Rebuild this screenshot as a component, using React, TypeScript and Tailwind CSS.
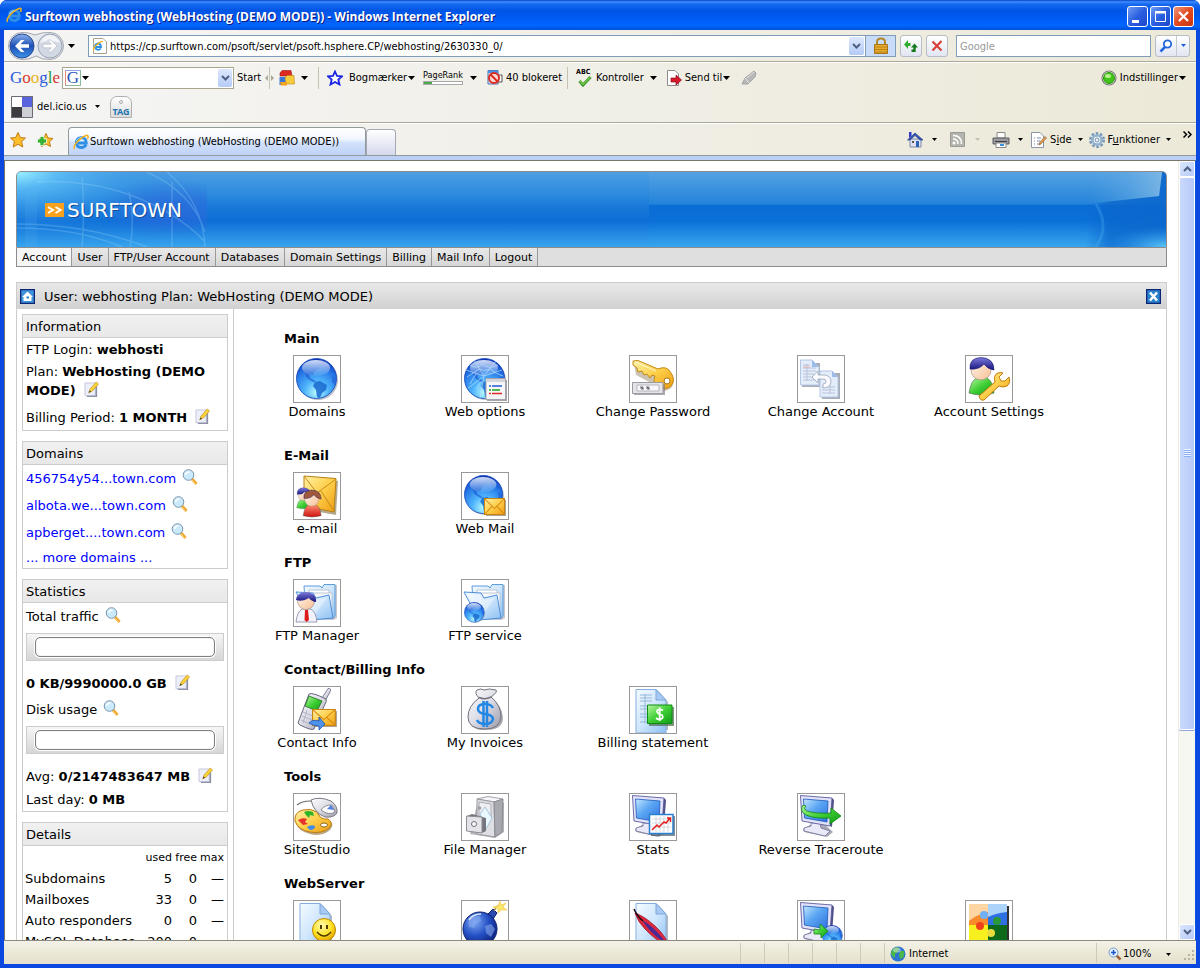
import type { ReactNode } from "react";

type Service = { name: string; icon: ReactNode };
type Section = { title: string; services: Service[] };

/* ---------- shared gradients ---------- */

function Gradients() {
  return (
    <svg width="0" height="0" className="absolute" aria-hidden="true">
      <defs>
        <radialGradient id="globe" cx="0.5" cy="0.85" r="0.85">
          <stop offset="0" stopColor="#b8fbff" />
          <stop offset="0.35" stopColor="#4fb4fb" />
          <stop offset="0.75" stopColor="#2171e4" />
          <stop offset="1" stopColor="#0c2fb4" />
        </radialGradient>
        <linearGradient id="shine" x1="0" y1="0" x2="0" y2="1">
          <stop offset="0" stopColor="#ffffff" stopOpacity="0.8" />
          <stop offset="1" stopColor="#ffffff" stopOpacity="0.05" />
        </linearGradient>
        <linearGradient id="gold" x1="0" y1="0" x2="1" y2="1">
          <stop offset="0" stopColor="#fff1a8" />
          <stop offset="0.5" stopColor="#fdcf4a" />
          <stop offset="1" stopColor="#ee9c12" />
        </linearGradient>
        <linearGradient id="folder" x1="0" y1="0" x2="1" y2="1">
          <stop offset="0" stopColor="#f4fbff" />
          <stop offset="0.5" stopColor="#cfe6fc" />
          <stop offset="1" stopColor="#8dc0f4" />
        </linearGradient>
        <linearGradient id="screen" x1="0" y1="0" x2="1" y2="1">
          <stop offset="0" stopColor="#c4e6ff" />
          <stop offset="0.45" stopColor="#5aa5f2" />
          <stop offset="1" stopColor="#2f6fe0" />
        </linearGradient>
        <linearGradient id="silver" x1="0" y1="0" x2="1" y2="1">
          <stop offset="0" stopColor="#ffffff" />
          <stop offset="0.5" stopColor="#dcdce6" />
          <stop offset="1" stopColor="#9a9aa8" />
        </linearGradient>
        <linearGradient id="green" x1="0" y1="0" x2="1" y2="1">
          <stop offset="0" stopColor="#b6f7a0" />
          <stop offset="0.5" stopColor="#3fcf35" />
          <stop offset="1" stopColor="#0f9a17" />
        </linearGradient>
        <linearGradient id="red" x1="0" y1="0" x2="0" y2="1">
          <stop offset="0" stopColor="#ff8d70" />
          <stop offset="1" stopColor="#cf1010" />
        </linearGradient>
        <linearGradient id="skin" x1="0" y1="0" x2="1" y2="1">
          <stop offset="0" stopColor="#fff6ec" />
          <stop offset="1" stopColor="#f7bf95" />
        </linearGradient>
        <linearGradient id="navy" x1="0" y1="0" x2="0" y2="1">
          <stop offset="0" stopColor="#7d7bdc" />
          <stop offset="1" stopColor="#15127c" />
        </linearGradient>
        <radialGradient id="bomb" cx="0.35" cy="0.3" r="0.8">
          <stop offset="0" stopColor="#7ea9f6" />
          <stop offset="0.5" stopColor="#2450c4" />
          <stop offset="1" stopColor="#0a1a70" />
        </radialGradient>
        <linearGradient id="back" x1="0" y1="0" x2="0" y2="1">
          <stop offset="0" stopColor="#8fb2ee" />
          <stop offset="0.5" stopColor="#1c4fb4" />
          <stop offset="1" stopColor="#3f93e8" />
        </linearGradient>
        <radialGradient id="smile" cx="0.4" cy="0.3" r="0.75">
          <stop offset="0" stopColor="#fffbb0" />
          <stop offset="0.6" stopColor="#ffdf1e" />
          <stop offset="1" stopColor="#e09a00" />
        </radialGradient>
        <radialGradient id="bannerGlow" cx="0" cy="0" r="0.9">
          <stop offset="0" stopColor="#9cf0ff" />
          <stop offset="0.25" stopColor="#5cc0f8" stopOpacity="0.8" />
          <stop offset="1" stopColor="#1e7fe0" stopOpacity="0" />
        </radialGradient>
        <radialGradient id="bannerDeep" cx="0.82" cy="0.5" r="0.4">
          <stop offset="0" stopColor="#2f68dc" stopOpacity="0.7" />
          <stop offset="0.5" stopColor="#2f68dc" stopOpacity="0.45" />
          <stop offset="1" stopColor="#2a70dc" stopOpacity="0" />
        </radialGradient>
        <linearGradient id="bannerSheen" x1="0" y1="0" x2="1" y2="0">
          <stop offset="0" stopColor="#4f9fe0" stopOpacity="0" />
          <stop offset="1" stopColor="#86bce6" stopOpacity="0.8" />
        </linearGradient>
        <linearGradient id="bannerDark" x1="0" y1="0" x2="1" y2="0">
          <stop offset="0" stopColor="#0a66cc" stopOpacity="0" />
          <stop offset="0.3" stopColor="#0a66cc" stopOpacity="0.7" />
          <stop offset="1" stopColor="#0a66cc" stopOpacity="0.9" />
        </linearGradient>
        <radialGradient id="bannerCorner" cx="1" cy="1" r="0.9">
          <stop offset="0" stopColor="#5cc8f8" />
          <stop offset="1" stopColor="#2a90e8" stopOpacity="0" />
        </radialGradient>
      </defs>
    </svg>
  );
}

/* ---------- 46px picture parts ---------- */

function Pic({ children }: { children: ReactNode }) {
  return (
    <svg viewBox="0 0 46 46" className="block h-full w-full" aria-hidden="true">
      {children}
    </svg>
  );
}

function Globe({ x = 2, y = 2, size = 42 }: { x?: number; y?: number; size?: number }) {
  return (
    <svg x={x} y={y} width={size} height={size} viewBox="0 0 42 42">
      <ellipse cx="22" cy="22" rx="20" ry="20" fill="#7b8494" opacity="0.5" />
      <circle cx="20.5" cy="20.5" r="20" fill="url(#globe)" stroke="#1243b8" strokeWidth="0.8" />
      <path
        d="M5 9 Q10 3 18 2 L24 4 L21 8 L24 10 L19 13 L17 17 L13 16 L14 20 L18 22 L20 24 L17 24 L11 20 L8 14 L4 13 Z"
        fill="#1f62d8"
        opacity="0.75"
      />
      <path d="M19 24 L24 23 L31 27 L30 32 L26 35 L24 40 L21 39 L20 32 L17 28 Z" fill="#1868cf" opacity="0.85" />
      <path d="M29 4 Q36 8 39 15 L35 14 L32 10 Z M36 18 L40 20 L39 27 L36 24 Z" fill="#1f62d8" opacity="0.7" />
      <ellipse cx="20" cy="10" rx="14" ry="8" fill="url(#shine)" />
    </svg>
  );
}

function Person({ hair, body }: { hair: string; body: string }) {
  return (
    <>
      <path d="M3 37 Q5 24 11 22 H21 Q27 25 28 37 Q15 41 3 37Z" fill={body} stroke="#49604a" strokeWidth="0.6" />
      <circle cx="15" cy="14" r="10" fill="url(#skin)" stroke="#9a8578" strokeWidth="0.6" />
      <path d="M4 13 Q3 2 15 1.500 Q28 2 28 14 Q21 13 18 8 Q13 14 4 13Z" fill={hair} stroke="#1a1470" strokeWidth="0.6" />
    </>
  );
}

function Folder() {
  return (
    <>
      <path d="M11 6 H27 L30 9 L31 5 H43 V38 L40 40 H14Z" fill="#7c8494" opacity="0.45" />
      <path d="M10 6 H26 L28 8 L30 4.500 H41 V36 L39 38 H12Z" fill="url(#folder)" stroke="#5d9be0" />
      <path d="M15 10 H35 V30 H15Z" fill="#ffffff" stroke="#b9c6d4" />
      <path d="M18 13 H38 V34 H18Z" fill="#f6f8fa" stroke="#b9c6d4" />
      <path d="M2 12 L19 13 L22 18 L35 15 L39 38 L17 40 Z" fill="url(#folder)" stroke="#4d8edb" />
      <path d="M5 14 L18 15 L21 20 L33 18 L20 36Z" fill="#ffffff" opacity="0.35" />
    </>
  );
}

function Mail({ x, y, w, h }: { x: number; y: number; w: number; h: number }) {
  return (
    <svg x={x} y={y} width={w} height={h} viewBox="0 0 22 17" preserveAspectRatio="none">
      <path d="M2 2 H22 V17 H2Z" fill="#8c8068" opacity="0.7" />
      <path d="M0.500 0.500 H20.500 V15.500 H0.500Z" fill="url(#gold)" stroke="#c98310" />
      <path d="M1 1 L10.500 10 L20 1 M1 15 L8 8 M20 15 L13 8" fill="none" stroke="#d88a10" />
    </svg>
  );
}

function Monitor() {
  return (
    <>
      <path d="M12 31 L24 28 L35 38 L29 43 L6 38 L5 35Z" fill="#55556a" opacity="0.5" />
      <path d="M13 29 L22 29 L23 34 L32 37 L27 42 L6 37 L6 34 L13 32Z" fill="#e9e9f8" stroke="#70709c" strokeWidth="0.8" />
      <path d="M2.500 1.500 L34 4 L32 32 L4 27Z" fill="#e2e2fb" stroke="#6c6ca6" />
      <path d="M34 4 L36 6 L34 33 L32 32Z" fill="#51518c" />
      <path d="M5.500 5 L30 7 L29 28 L6.500 24Z" fill="url(#screen)" stroke="#1c55b8" strokeWidth="0.8" />
    </>
  );
}

function Sheet({ lines = false }: { lines?: boolean }) {
  return (
    <>
      <path d="M8 4 H28 L38 15 V43 H8Z" fill="#6c7686" opacity="0.5" />
      <path d="M6 2.500 H26 L36 13 V46 H6Z" fill="url(#folder)" stroke="#86aede" />
      <path d="M26 2.500 V13 H36Z" fill="#a8c9f2" stroke="#7ba6dc" />
      {lines && (
        <path
          d="M10 8 H22 M10 11 H22 M10 14 H22 M10 19 H32 M10 22 H32 M10 27 H32 M10 30 H32 M10 35 H32 M15 7 V36 M21 18 V36"
          stroke="#93b7d8"
          fill="none"
        />
      )}
    </>
  );
}

/* ---------- service pictures ---------- */

const domainsPic = <Pic><Globe /></Pic>;

const webOptionsPic = (
  <Pic>
    <Globe />
    <path
      d="M4 14 L22 20 L40 14 M22 20 L12 4 M22 20 L34 5 M22 20 L6 32 M22 20 L18 42 M8 9 Q16 14 20 8 Q26 14 36 9 M5 21 Q13 16 17 13 Q23 16 28 13 Q32 17 41 20 M8 28 Q12 21 14 18 M15 33 Q17 27 20 25"
      fill="none"
      stroke="#b8dcfc"
      strokeWidth="0.7"
    />
    <path d="M25 24 H45 V45 H25Z" fill="#6b6b72" opacity="0.6" />
    <path d="M24 22.500 H43.500 V43.500 H24Z" fill="#f6f6f8" stroke="#a2a2ac" />
    <path d="M24 23 H43 V26 H24Z" fill="#d5d5de" />
    <path d="M27 30 H29 M30 30 H40" stroke="#2458d0" strokeWidth="1.500" />
    <path d="M27 34 H29 M30 34 H38" stroke="#1ea31e" strokeWidth="1.500" />
    <path d="M27 37.500 H29 M30 37.500 H40" stroke="#e02828" strokeWidth="1.500" />
  </Pic>
);

const passwordPic = (
  <Pic>
    <path d="M4 8 L25 18 Q33 10 40 16 Q46 22 42 31 Q36 37 28 34 L23 28 L6 19Z" fill="#7d6a40" opacity="0.4" />
    <path
      d="M3 5 L8 4.500 L28 13 Q37 9 41 17 Q46 24 41 30 Q35 35 28 31 Q22 27 25 20 L22 19 L20 22 L17 18 L14 19 L12 15 L8 16 L7 12 L3 9Z"
      fill="url(#gold)"
      stroke="#c28a10"
    />
    <path d="M5 6 L26 15" stroke="#fff7c8" fill="none" />
    <circle cx="37" cy="25" r="3" fill="#ffffff" stroke="#a87410" />
    <path d="M4 28 H35 V39 H4Z" fill="#75757c" opacity="0.6" />
    <path d="M2.500 26.500 H33 V37.500 H2.500Z" fill="#e5e5e9" stroke="#9a9aa2" />
    <path d="M7 29 H29 V35 H7Z" fill="#f8f8fa" stroke="#a8a8b0" strokeWidth="0.8" />
    <path d="M10 32 H14 M12 30 V34 M10.500 30.500 L13.500 33.500 M16 32 H20 M18 30 V34 M16.500 30.500 L19.500 33.500" stroke="#4c4c54" strokeWidth="0.8" />
  </Pic>
);

const changeAccountPic = (
  <Pic>
    <path d="M4 7 H22 V31 H4Z" fill="#6f7684" opacity="0.6" />
    <path d="M2.500 4 H14 L21 11 V29 H2.500Z" fill="#e4edfa" stroke="#b3c6e4" />
    <path d="M14 4 V11 H21Z" fill="#9dbbe8" />
    <path d="M5 9 H12 M5 12 H18 M5 15 H18 M5 18 H16 M5 21 H18 M5 24 H18 M9 8 V25" stroke="#b7c4da" fill="none" />
    <path d="M5 11 H12" stroke="#e8b2b2" />
    <path d="M24 17 H42 V43 H24Z" fill="#6f7684" opacity="0.6" />
    <path d="M22 15 H34 L40 21 V41 H22Z" fill="#e4edfa" stroke="#b3c6e4" />
    <path d="M34 15 V21 H40Z" fill="#9dbbe8" />
    <path d="M24 31 H37 M24 34 H37 M24 37 H37 M32 24 V38" stroke="#b7c4da" fill="none" />
    <path d="M14 21 L20 15 V19 H27 Q33 20 33 26 Q32 32 25 32 V28 Q28 28 28 25.500 Q28 23 25 23 H20 V27Z" fill="#fbfbff" stroke="#9ba5b8" strokeWidth="0.8" />
  </Pic>
);

const accountSettingsPic = (
  <Pic>
    <Person hair="url(#navy)" body="url(#green)" />
    <path
      d="M13 40 L29 26 Q27 19 32 17 Q35 16 37 17 L33 21 L35 25 L39 25 L43 21 Q45 27 41 30 Q37 32 33 30 L18 44 Q14 45 13 40Z"
      fill="url(#gold)"
      stroke="#c27c0c"
    />
  </Pic>
);

const emailPic = (
  <Pic>
    <path d="M11 5 L44 8 L42 42 L14 37Z" fill="#80704a" opacity="0.6" />
    <path d="M10 3 L42 5.500 L40 39 L10 33Z" fill="url(#gold)" stroke="#b98212" />
    <path d="M10 3 L23 20 L42 6 M10 33 L22 19 M40 38 L27 18" fill="none" stroke="#c88a18" />
    <g transform="translate(1 14) scale(0.560)">
      <Person hair="url(#navy)" body="url(#green)" />
    </g>
    <g transform="translate(7 16) scale(0.720)">
      <Person hair="#a0583c" body="url(#red)" />
    </g>
  </Pic>
);

const webMailPic = (
  <Pic>
    <Globe size={40} />
    <Mail x={22} y={25} w={22} h={18} />
  </Pic>
);

const ftpManagerPic = (
  <Pic>
    <Folder />
    <path d="M2 42 Q3 32 8 29 H17 Q22 32 23 42Z" fill="#f2f2fa" stroke="#8585a2" strokeWidth="0.8" />
    <path d="M11 30 H14 L15 40 L12.500 42 L10.500 40Z" fill="#dd1a1a" />
    <circle cx="12" cy="21" r="8.500" fill="url(#skin)" stroke="#9a8578" strokeWidth="0.6" />
    <path d="M2 20 Q3 12 12 12 Q23 13 22 22 Q17 21 15 18 Q9 22 2 20Z" fill="url(#navy)" />
  </Pic>
);

const ftpServicePic = (
  <Pic>
    <Folder />
    <Globe x={2} y={22} size={21} />
  </Pic>
);

const contactPic = (
  <Pic>
    <path d="M28 11 L34 1.500 Q38 1 36 5 L31 14Z" fill="url(#silver)" stroke="#666680" strokeWidth="0.8" />
    <path d="M4 36 L15 7 Q18 5 32 12 Q33 14 31 17 L20 42 Q18 44 6 38Z" fill="url(#silver)" stroke="#666680" />
    <path d="M15 9 L28 14 L23 24 L11 19Z" fill="url(#green)" stroke="#206c20" strokeWidth="0.8" />
    <path d="M9 25 L19 29 M8 29 L18 33 M7 33 L16 37 M13 23 L9 36" stroke="#b4b4c4" fill="none" />
    <Mail x={18} y={22} w={25} h={18} />
    <path d="M15 36 Q18 32 25 34 V30 L31 37 L25 43 V39 Q19 39 15 36Z" fill="#4f92ea" stroke="#1c56b8" strokeWidth="0.8" />
  </Pic>
);

const invoicesPic = (
  <Pic>
    <path d="M17 11 Q5 20 6 32 Q9 44 24 43 Q41 43 41 31 Q40 18 29 11Z" fill="#55555e" opacity="0.5" />
    <path d="M15 3 Q19 1 22 3 Q27 1 34 3 Q36 5 29 10 Q39 18 39 30 Q38 42 23 42 Q6 42 6 30 Q6 19 17 11 Q12 6 15 3Z" fill="url(#silver)" stroke="#73737e" />
    <path d="M17 10.500 Q23 13 29 10" fill="none" stroke="#73737e" strokeWidth="1.500" />
    <path
      d="M31 21 Q29 17 23 17 Q16 17 16 22 Q16 26 23 27 Q31 28 31 32 Q30 37 23 37 Q17 37 15 33 M21.500 14 V40 M25 14 V40"
      fill="none"
      stroke="#2287e4"
      strokeWidth="2.500"
    />
  </Pic>
);

const billingPic = (
  <Pic>
    <Sheet lines />
    <path d="M19 20 H44 V39 H19Z" fill="#4c6a4c" opacity="0.7" />
    <path d="M17.500 18 H42 V36.500 H17.500Z" fill="url(#green)" stroke="#0f8a15" />
    <path d="M33 23.500 Q30 21.500 27.500 23 Q26 25 29 27 L32 28 Q34 31 31 32 Q28 33 26 31 M29.700 20.500 V34" fill="none" stroke="#ffffff" strokeWidth="1.800" />
  </Pic>
);

const studioPic = (
  <Pic>
    <path d="M3 11 Q8 7 16 7 Q20 7 22 9" fill="none" stroke="#6c6c70" strokeWidth="1.200" />
    <path d="M2 29 Q0 20 9 17 Q17 14 25 20 Q27 27 35 26 Q41 30 36 36 Q28 43 16 40 Q4 37 2 29Z" fill="#8a6a34" opacity="0.6" />
    <path d="M1 27 Q0 18 9 16 Q17 14 23 18 Q26 26 34 25 Q40 29 35 34 Q28 40 16 38 Q4 36 1 27Z" fill="url(#gold)" stroke="#bd7a0e" />
    <path d="M10 18 Q14 16 19 18 L20 22 L16 21 L15 24 L12 21Z" fill="#2db52a" />
    <path d="M4 26 Q9 23 13 25 L11 28 L14 30 L9 31 L7 29Z" fill="#e4342c" />
    <path d="M13 33 Q17 30 21 32 Q21 36 16 36Z" fill="#3f8be6" />
    <ellipse cx="30" cy="31" rx="3.500" ry="2" fill="#ffffff" stroke="#8e6414" />
    <path d="M17 6 Q25 2 37 7 Q44 12 43 19 Q40 24 31 23 Q20 19 17 6Z" fill="url(#silver)" stroke="#7b7b84" />
    <path d="M27 16 Q30 11 38 11 L41 18 Q35 22 27 16Z" fill="#ffffff" stroke="#8c8c98" />
    <path d="M33 15 L37 11 L40 16Z" fill="#4f7fe0" />
  </Pic>
);

const filePic = (
  <Pic>
    <path d="M16 6 L33 4 L42 9 V38 L33 44 L8 40Z" fill="#44444c" opacity="0.4" />
    <path d="M15 5 L26 2.500 L41 5 L32 8Z" fill="#f6f6f8" stroke="#a4a4ac" />
    <path d="M15 5 L32 8 L33 43 L15 40Z" fill="#dedee4" stroke="#9a9aa2" />
    <path d="M32 8 L41 5 L40 38 L33 43Z" fill="#a8a8b0" stroke="#8c8c94" />
    <path d="M17 8 L29 10 V24 L17 22Z" fill="#eeeef2" stroke="#aaaab2" />
    <circle cx="17.500" cy="14" r="1.800" fill="#a0a0a8" />
    <path d="M18 20 L23 13 L30 24 L24 35Z" fill="#eaf8ff" stroke="#a5c5da" />
    <path d="M5 22 L10 20 L24 24 L24 37 L20 39Z" fill="#74747c" />
    <path d="M4.500 22 L20 23 V39 L4.500 37Z" fill="#e4e4e8" stroke="#8c8c94" />
    <circle cx="12" cy="30" r="2.500" fill="#ffffff" stroke="#707078" />
  </Pic>
);

const statsPic = (
  <Pic>
    <Monitor />
    <path d="M21 22 H45 V42 H21Z" fill="#4c5c6c" opacity="0.7" />
    <path d="M19.500 20.500 H43 V39.500 H19.500Z" fill="#ffffff" stroke="#2a80cc" strokeWidth="1.500" />
    <path d="M22 25 H41 M22 29 H41 M22 33 H41 M26 22 V38 M30 22 V38 M34 22 V38 M38 22 V38" stroke="#c4ccd4" strokeWidth="0.700" />
    <path d="M22 36 L27 31 L29 33 L34 28 L36 29 L40 24 M37 24 H40.500 V28" fill="none" stroke="#e42020" strokeWidth="1.500" />
  </Pic>
);

const traceroutePic = (
  <Pic>
    <Monitor />
    <path
      d="M5 11 Q1 17 8 21 Q17 25 32 24 V30 L43 22 L33 14 V19 Q18 20 9 17 Q5 15 8 12Z"
      fill="url(#green)"
      stroke="#0c8412"
      strokeWidth="0.8"
    />
  </Pic>
);

const smilePic = (
  <Pic>
    <Sheet />
    <circle cx="30" cy="29" r="11.500" fill="url(#smile)" stroke="#bd8a00" />
    <path d="M27 24 V28 M33 24 V28" stroke="#4c3800" strokeWidth="2" />
    <path d="M23 31 Q30 39 37 31" fill="none" stroke="#4c3800" strokeWidth="1.500" />
  </Pic>
);

const bombPic = (
  <Pic>
    <path d="M26 13 L31 8 L35 12 L31 18Z" fill="#2b4bb0" stroke="#0c1f6c" />
    <path d="M32 10 Q35 4 38 5" stroke="#8c7a50" fill="none" strokeWidth="1.500" />
    <path d="M38 0 L39 4 L44 2 L41 6 L45 9 L39 9 L36 12 L36 8 L31 6 L36 5Z" fill="#fbe56a" stroke="#edc440" strokeWidth="0.600" />
    <circle cx="18" cy="28" r="17" fill="url(#bomb)" stroke="#0c1f6c" />
    <path d="M6 21 Q11 14 18 15 L19 20 L14 22 L12 27 L7 26Z M23 25 L29 23 L33 28 L29 36 L24 32Z" fill="#86a9ec" opacity="0.6" />
    <path d="M7 19 Q11 13 19 13" stroke="#dbe7ff" strokeWidth="1.500" fill="none" />
  </Pic>
);

const featherPic = (
  <Pic>
    <Sheet />
    <path d="M5 12 Q14 15 25 25 Q35 34 40 46 Q26 40 15 28 Q8 21 5 12Z" fill="#e0283c" stroke="#a01828" strokeWidth="0.8" />
    <path d="M12 19 Q25 26 36 42 Q22 35 12 19Z" fill="#4b2a92" />
    <path d="M4 8 Q7 15 13 20" stroke="#1a0a10" strokeWidth="1.500" fill="none" />
  </Pic>
);

const uploadPic = (
  <Pic>
    <Monitor />
    <Globe x={24} y={24} size={21} />
    <path d="M16 28 L22 29 V23 L30 30 L23 37 V33 L16 33Z" fill="url(#green)" stroke="#0f8a15" strokeWidth="0.8" />
  </Pic>
);

const puzzlePic = (
  <Pic>
    <path d="M5 5 H43 V46 H5Z" fill="#333" />
    <path d="M3 3 H22 V24 H3Z" fill="#f98a2c" />
    <path d="M3 3 H22 V11 Q10 14 3 20Z" fill="#fdd6a4" />
    <path d="M22 3 H41 V24 H22Z" fill="#2f6fe4" />
    <path d="M22 3 H41 V11 Q30 12 22 16Z" fill="#acd4fb" />
    <path d="M3 24 H22 V46 H3Z" fill="#f8f01e" />
    <path d="M22 24 H41 V46 H22Z" fill="#0d6a1a" />
    <circle cx="18" cy="14" r="4" fill="#6fb0f6" />
    <circle cx="14" cy="25" r="4" fill="#f0401c" />
    <circle cx="31" cy="20" r="4" fill="#2a9a38" />
    <circle cx="25" cy="32" r="4" fill="#e8dc3c" />
  </Pic>
);

const sections: Section[] = [
  {
    title: "Main",
    services: [
      { name: "Domains", icon: domainsPic },
      { name: "Web options", icon: webOptionsPic },
      { name: "Change Password", icon: passwordPic },
      { name: "Change Account", icon: changeAccountPic },
      { name: "Account Settings", icon: accountSettingsPic },
    ],
  },
  {
    title: "E-Mail",
    services: [
      { name: "e-mail", icon: emailPic },
      { name: "Web Mail", icon: webMailPic },
    ],
  },
  {
    title: "FTP",
    services: [
      { name: "FTP Manager", icon: ftpManagerPic },
      { name: "FTP service", icon: ftpServicePic },
    ],
  },
  {
    title: "Contact/Billing Info",
    services: [
      { name: "Contact Info", icon: contactPic },
      { name: "My Invoices", icon: invoicesPic },
      { name: "Billing statement", icon: billingPic },
    ],
  },
  {
    title: "Tools",
    services: [
      { name: "SiteStudio", icon: studioPic },
      { name: "File Manager", icon: filePic },
      { name: "Stats", icon: statsPic },
      { name: "Reverse Traceroute", icon: traceroutePic },
    ],
  },
  {
    title: "WebServer",
    services: [
      { name: "", icon: smilePic },
      { name: "", icon: bombPic },
      { name: "", icon: featherPic },
      { name: "", icon: uploadPic },
      { name: "", icon: puzzlePic },
    ],
  },
];

const menu = ["Account", "User", "FTP/User Account", "Databases", "Domain Settings", "Billing", "Mail Info", "Logout"];

const domains = ["456754y54...town.com", "albota.we...town.com", "apberget....town.com"];

const details = [
  { name: "Subdomains", used: 5, free: 0 },
  { name: "Mailboxes", used: 33, free: 0 },
  { name: "Auto responders", used: 0, free: 0 },
  { name: "MySQL Database", used: 200, free: 0 },
];

/* ---------- browser chrome ---------- */

function Caret({ className = "text-black" }: { className?: string }) {
  return (
    <svg viewBox="0 0 7 4" className={`h-1 w-[7px] shrink-0 ${className}`} aria-hidden="true">
      <path d="M0 0 H7 L3.500 4Z" fill="currentColor" />
    </svg>
  );
}

function SmallCaret({ className = "text-black" }: { className?: string }) {
  return (
    <svg viewBox="0 0 5 3" className={`h-[3px] w-[5px] shrink-0 ${className}`} aria-hidden="true">
      <path d="M0 0 H5 L2.500 3Z" fill="currentColor" />
    </svg>
  );
}

function Chevron({ up = false }: { up?: boolean }) {
  return (
    <svg viewBox="0 0 9 6" className="h-[6px] w-[9px]" aria-hidden="true">
      <path d={up ? "M1 5 L4.500 1.500 L8 5" : "M1 1 L4.500 4.500 L8 1"} fill="none" stroke="#4d6185" strokeWidth="2" />
    </svg>
  );
}

function IeLogo() {
  return (
    <svg viewBox="0 0 16 16" className="h-4 w-4 shrink-0" aria-hidden="true">
      <path d="M13.200 10.800 Q11.500 13.600 8.200 13.600 Q3.500 13.300 3.300 8.600 Q3.600 4 8.200 3.700 Q13.200 4 13.300 9 H5" fill="none" stroke="#2f8fe6" strokeWidth="2.800" />
      <path d="M3.200 7 Q4.500 4 8.500 3.300" fill="none" stroke="#a4d8fa" />
      <path d="M1.500 15 Q0 12 5 7 Q10 2 14 1.200 Q16 1.500 14.500 5" fill="none" stroke="#f2b21c" strokeWidth="1.500" />
    </svg>
  );
}

function TitleBar() {
  const buttonClass = "flex h-[21px] w-[21px] items-center justify-center rounded-[3px] border border-white";
  return (
    <header className="flex h-[30px] shrink-0 items-center gap-[3px] bg-[linear-gradient(180deg,#0842c4_0%,#3c8cff_6%,#1668ee_14%,#0055e5_35%,#0059f0_55%,#0066ff_85%,#0050d8_100%)] pl-[6px] pr-[6px]">
      <IeLogo />
      <h1 className="flex-1 truncate pt-1 font-['Open_Sans',sans-serif] text-[12px] font-bold leading-4 text-white [text-shadow:1px_1px_0_#0a1883]">
        Surftown webhosting (WebHosting (DEMO MODE)) - Windows Internet Explorer
      </h1>
      <div className="flex gap-[2px] pt-[3px]">
        <button aria-label="Minimize" className={`${buttonClass} bg-[linear-gradient(135deg,#6d9bf5,#2b5fe0_50%,#1c46c8)]`}>
          <svg viewBox="0 0 19 19" className="h-[19px] w-[19px]"><path d="M4 13 H11 V16 H4Z" fill="#fff" /></svg>
        </button>
        <button aria-label="Maximize" className={`${buttonClass} bg-[linear-gradient(135deg,#6d9bf5,#2b5fe0_50%,#1c46c8)]`}>
          <svg viewBox="0 0 19 19" className="h-[19px] w-[19px]"><path d="M4.500 5.500 H14.500 V14.500 H4.500Z M4 4.500 H15 M4 6 H15" fill="none" stroke="#fff" /></svg>
        </button>
        <button aria-label="Close" className={`${buttonClass} bg-[linear-gradient(135deg,#f0977d,#e2491f_50%,#c93410)]`}>
          <svg viewBox="0 0 19 19" className="h-[19px] w-[19px]"><path d="M5 5 L14 14 M14 5 L5 14" stroke="#fff" strokeWidth="2.200" /></svg>
        </button>
      </div>
    </header>
  );
}

function AddressBar() {
  const toolButton = "flex h-[22px] w-[22px] shrink-0 items-center justify-center rounded-[3px] border border-[#b8bcc4] bg-gradient-to-b from-white to-[#e2e6f2]";
  return (
    <div className="flex h-8 items-center border-b border-[#aca899] pl-[4px] pr-[6px]">
      <svg viewBox="0 0 56 30" className="h-[30px] w-14 shrink-0" aria-label="Back and forward" role="img">
        <path d="M14 1.500 Q20 1 27 4 Q34 1 42 1.500 A13 13 0 0 1 42 28.500 Q34 29 28 25 Q21 29 14 28.500 A13 13 0 0 1 14 1.500Z" fill="#e6e9ee" stroke="#a5a8ae" />
        <circle cx="14" cy="15" r="12" fill="url(#back)" stroke="#274b94" />
        <path d="M7 15 L13 9 H16.500 L12.500 13.200 H21 V16.800 H12.500 L16.500 21 H13Z" fill="#fff" />
        <circle cx="42" cy="15" r="12" fill="#d3d9e3" stroke="#98a2b4" />
        <path d="M32 12 Q36 4 42 4 Q49 4 52 12 Q42 8 32 12Z" fill="#fff" opacity="0.7" />
        <path d="M49 15 L43 9 H39.500 L43.500 13.200 H35 V16.800 H43.500 L39.500 21 H43Z" fill="#fff" stroke="#b6bdc9" strokeWidth="0.700" />
      </svg>
      <button aria-label="Recent pages" className="flex h-5 w-6 items-center pl-1"><Caret /></button>
      <div className="flex h-[22px] min-w-0 flex-1 items-center border border-[#7f9db9] bg-white">
        <svg viewBox="0 0 18 18" className="ml-[2px] h-[18px] w-[18px] shrink-0" aria-hidden="true">
          <path d="M2.500 1.500 H12 L15.500 5 V16.500 H2.500Z" fill="#fff" stroke="#a5a18e" />
          <path d="M9.800 11.500 Q8.500 13 6.800 12.800 Q4 12.300 4 9.600 Q4.200 6.800 7 6.500 Q10 6.800 10 10 H4.500" fill="none" stroke="#2f8fe6" strokeWidth="1.800" />
          <path d="M2.500 14 Q2 11 6 7.500 Q10 4 12 4.500" fill="none" stroke="#f2b21c" strokeWidth="1.200" />
        </svg>
        <input
          aria-label="Address"
          defaultValue="https://cp.surftown.com/psoft/servlet/psoft.hsphere.CP/webhosting/2630330_0/"
          className="h-full min-w-0 flex-1 bg-transparent pl-px pt-px outline-none"
        />
        <button aria-label="Show addresses" className="flex h-[18px] w-[15px] shrink-0 items-center justify-center rounded-[2px] bg-gradient-to-b from-[#dde8fd] to-[#b4caf6]"><Chevron /></button>
        <button aria-label="Security report" className="ml-px flex h-[20px] w-[30px] shrink-0 items-center justify-center border-l border-[#7f9db9] bg-[#c8dcf9]">
          <svg viewBox="0 0 14 17" className="h-[17px] w-[14px]">
            <path d="M3 8 V5 Q3 1.500 7 1.500 Q11 1.500 11 5 V8" fill="none" stroke="#b08a28" strokeWidth="2" />
            <path d="M0.500 7.500 H13.500 V16.500 H0.500Z" fill="#e7ad2c" stroke="#a8741a" />
            <path d="M1 10 H13 M1 12.500 H13 M1 15 H13" stroke="#bd8216" />
          </svg>
        </button>
      </div>
      <div className="ml-1 mr-2 flex gap-1">
        <button aria-label="Refresh" className={toolButton}>
          <svg viewBox="0 0 16 16" className="h-4 w-4">
            <path d="M1 6.500 L5 2 V5 H7.500 V8 H5 V11Z" fill="#2fae2f" />
            <path d="M15 9.500 L11.500 5.500 L8 9.500 H10.300 V11.500 H8.500 V14 H12.700 V9.500Z" fill="#147a1c" />
          </svg>
        </button>
        <button aria-label="Stop" className={toolButton}>
          <svg viewBox="0 0 12 12" className="h-3 w-3"><path d="M1.500 1.500 L10.500 10.500 M10.500 1 L1.500 10.500" stroke="#d8403c" strokeWidth="2.200" /></svg>
        </button>
      </div>
      <input
        aria-label="Search"
        placeholder="Google"
        className="h-[22px] w-[195px] shrink-0 border border-[#7f9db9] bg-white px-[3px] pt-px outline-none placeholder:text-[#999]"
      />
      <div className="ml-1 flex h-[22px] w-[35px] shrink-0 rounded-[3px] border border-[#b8bcc4] bg-gradient-to-b from-white to-[#e2e6f2]">
        <button aria-label="Search now" className="flex w-[21px] items-center justify-center border-r border-[#c4c8d0]">
          <svg viewBox="0 0 14 14" className="h-[14px] w-[14px]">
            <circle cx="8.500" cy="5" r="3.700" fill="#fff" stroke="#2465dc" strokeWidth="1.800" />
            <path d="M6 8 L1.500 12.500" stroke="#2465dc" strokeWidth="2.500" />
          </svg>
        </button>
        <button aria-label="Search options" className="flex flex-1 items-center justify-center"><SmallCaret className="text-[#1f5fe0]" /></button>
      </div>
    </div>
  );
}

function Bar() {
  return <span className="h-[22px] w-px shrink-0 bg-[#c5c2b2]" />;
}

function Toolbars() {
  return (
    <div className="h-[61px] border-b border-[#aca899] border-t border-t-white">
      <div className="flex h-[29px] items-center whitespace-nowrap pl-[6px] pr-[10px]">
        <span className="w-[52px] shrink-0 font-['Liberation_Serif',serif] text-[17px] leading-5">
          <span className="text-[#2a5bd7]">G</span>
          <span className="text-[#d83a2c]">o</span>
          <span className="text-[#e8b41c]">o</span>
          <span className="text-[#2a5bd7]">g</span>
          <span className="text-[#2f9a3c]">l</span>
          <span className="text-[#d83a2c]">e</span>
        </span>
        <div className="flex h-[22px] w-[172px] shrink-0 items-center border border-[#aaa68f] bg-white">
          <span className="ml-[2px] flex h-4 w-4 items-center justify-center border border-[#8fb8a0] border-l-[#e08a80] border-t-[#8aa8e0] font-['Liberation_Serif',serif] text-[17px] leading-4 text-[#2a55b8]">G</span>
          <span className="ml-px flex"><Caret /></span>
          <input aria-label="Google search" className="h-full min-w-0 flex-1 bg-transparent outline-none" />
          <button aria-label="Search history" className="mr-px flex h-[18px] w-[14px] items-center justify-center rounded-[2px] bg-gradient-to-b from-[#dde8fd] to-[#b4caf6]"><Chevron /></button>
        </div>
        <button className="ml-[3px] w-7 shrink-0 text-left">Start</button>
        <svg viewBox="0 0 9 22" className="h-[22px] w-[9px] shrink-0" aria-hidden="true">
          <path d="M4.500 0 V22" stroke="#c5c2b2" />
          <path d="M3 8 L0 11 L3 14Z M6 8 L9 11 L6 14Z" fill="#aaa798" />
        </svg>
        <svg viewBox="0 0 16 16" className="ml-[5px] h-4 w-4 shrink-0" aria-hidden="true">
          <path d="M1 3 L3 0.500 H12 L13 6 H1Z" fill="#dc2a20" stroke="#9a1a14" strokeWidth="0.600" />
          <path d="M0.500 7 H7 V15 H0.500Z" fill="#3a78dc" />
          <path d="M6 8 L8 5.500 H15 L15.500 14 H7Z" fill="#f7cc3c" stroke="#b88c18" strokeWidth="0.600" />
          <path d="M1 12 H8 V15.500 H2Z" fill="#f3a21e" />
        </svg>
        <span className="ml-[6px] mr-[10px] flex"><Caret /></span>
        <Bar />
        <svg viewBox="0 0 16 16" className="ml-2 h-4 w-4 shrink-0" aria-hidden="true">
          <path d="M8 1.500 L10 6 L15 6.300 L11.300 9.500 L12.500 14.500 L8 12 L3.500 14.500 L4.700 9.500 L1 6.300 L6 6Z" fill="#fff" stroke="#1b24e6" strokeWidth="1.800" />
        </svg>
        <button className="ml-[6px] flex items-center gap-px">Bogmærker<Caret /></button>
        <span className="ml-2 flex w-[45px] shrink-0 flex-col text-[9px] leading-[10px]">
          PageRank
          <span className="mt-px block h-1 w-10 border border-[#a8a8a8] bg-white"><span className="block h-[2px] w-2 bg-[#4ca64c]" /></span>
        </span>
        <span className="ml-[2px] flex"><Caret /></span>
        <svg viewBox="0 0 17 17" className="ml-[9px] h-[17px] w-[17px] shrink-0" aria-hidden="true">
          <path d="M2 1.500 H12 V15 H2Z" fill="#dcebfb" stroke="#4a6eb0" />
          <path d="M2 1.500 H12 V4 H2Z" fill="#4c90e4" />
          <path d="M12 6 H16 V13 H12Z" fill="#fff" stroke="#555" />
          <circle cx="8" cy="9" r="5" fill="#fbdcd8" stroke="#dc2a20" strokeWidth="2" />
          <path d="M4.500 5.500 L11.500 12.500" stroke="#dc2a20" strokeWidth="2" />
        </svg>
        <button className="ml-[3px] w-[61px] shrink-0 text-left">40 blokeret</button>
        <Bar />
        <span className="ml-2 flex w-[18px] shrink-0 flex-col items-start text-[7px] font-bold leading-[7px]">
          ABC
          <svg viewBox="0 0 14 11" className="ml-[2px] h-[11px] w-[14px]" aria-hidden="true">
            <path d="M1.500 5 L5 9 L12.500 1" fill="none" stroke="#3d9a2a" strokeWidth="3" />
            <path d="M2 5 L5 8.500 L12 1.500" fill="none" stroke="#96e468" />
          </svg>
        </span>
        <button className="ml-[2px] flex items-center gap-[6px]">Kontroller<Caret /></button>
        <svg viewBox="0 0 16 16" className="ml-[9px] h-4 w-4 shrink-0" aria-hidden="true">
          <path d="M1.500 0.500 H9 L12.500 4 V15.500 H1.500Z" fill="#fff" stroke="#8c8c8c" />
          <path d="M5 8 H10 V5 L15.500 10 L10 15 V12 H5Z" fill="#d8182c" stroke="#8a0c18" strokeWidth="0.700" />
        </svg>
        <button className="ml-[3px] flex items-center gap-px">Send til<Caret /></button>
        <svg viewBox="0 0 16 16" className="ml-[11px] h-4 w-4 shrink-0" aria-hidden="true">
          <path d="M1 14 L4 8 L13 1 L15 3 L14 7 L7 14Z" fill="#b8b8b8" stroke="#9a9a9a" strokeWidth="0.800" />
          <path d="M4 8 L8 13 M6 8 L13 2" stroke="#e4e4e4" fill="none" />
        </svg>
        <button className="ml-auto flex items-center gap-[3px]">
          <svg viewBox="0 0 16 16" className="h-4 w-4" aria-hidden="true">
            <circle cx="8" cy="8" r="7" fill="#fff" stroke="#7a7a7a" strokeWidth="1.200" />
            <circle cx="8" cy="8" r="5.500" fill="#43c41a" stroke="#2a9410" />
            <ellipse cx="7" cy="6" rx="3" ry="2" fill="#b6f08c" />
          </svg>
          <span className="flex items-center gap-px">Indstillinger<Caret /></span>
        </button>
      </div>
      <div className="flex h-[29px] items-center pl-[7px]">
        <svg viewBox="0 0 22 22" className="h-[22px] w-[22px] shrink-0" aria-hidden="true">
          <path d="M0 0 H11 V11 H0Z" fill="#fff" />
          <path d="M11 0 H22 V11 H11Z" fill="#5a64dc" />
          <path d="M0 11 H11 V22 H0Z" fill="#3c3c40" />
          <path d="M11 11 H22 V22 H11Z" fill="#cfcfd6" />
          <path d="M0.500 0.500 H21.500 V21.500 H0.500Z" fill="none" stroke="#6c6c74" />
        </svg>
        <button className="ml-1 flex w-[63px] items-center justify-between">del.icio.us<SmallCaret /></button>
        <span className="ml-[10px] flex h-[22px] w-[22px] flex-col items-center justify-end rounded-t-[7px] border border-[#b0b0b0] bg-gradient-to-b from-white to-[#dcdcdc]">
          <span className="h-1 w-1 rounded-full border border-[#aaa]" />
          <span className="mt-[2px] font-['Noto_Sans',sans-serif] text-[9px] font-bold leading-[11px] text-[#2474b0]">TAG</span>
        </span>
      </div>
    </div>
  );
}

function TabRow() {
  return (
    <div className="flex h-[33px] items-center border-b border-[#919b9c] border-t border-t-white">
      <svg viewBox="0 0 44 16" className="ml-[6px] h-4 w-11 shrink-0" aria-label="Favorites" role="img">
        <path d="M8 0.500 L10.300 5.500 L15.500 6 L11.600 9.600 L12.800 15 L8 12.300 L3.200 15 L4.400 9.600 L0.500 6 L5.700 5.500Z" fill="#fbc02c" stroke="#c07a14" />
        <path d="M36 1.500 L38 6 L43 6.500 L39.500 9.600 L40.500 14.500 L36 12 L31.500 14.500 L32.500 9.600 L29 6.500 L34 6Z" fill="#fbc02c" stroke="#c07a14" />
        <path d="M30 4.500 H34 V7 H36.500 V11 H34 V13.500 H30 V11 H27.500 V7 H30Z" fill="#36b136" stroke="#fff" strokeWidth="0.700" />
      </svg>
      <div className="ml-[14px] flex h-[28px] w-[298px] items-center gap-px self-end rounded-t-[4px] border border-b-0 border-[#919b9c] bg-[linear-gradient(180deg,#fff_0%,#f3f7fe_40%,#d2e1fb_55%,#c0d3f7_100%)] pl-1">
        <IeLogo />
        <span className="truncate">Surftown webhosting (WebHosting (DEMO MODE))</span>
      </div>
      <button aria-label="New tab" className="h-[26px] w-[30px] self-end rounded-t-[4px] border border-b-0 border-[#a4a8b4] bg-gradient-to-b from-white to-[#d5d9ec]" />
      <div className="ml-auto flex items-center">
        <svg viewBox="0 0 17 17" className="h-[17px] w-[17px]" aria-label="Home" role="img">
          <path d="M3 8 H14 V16 H3Z" fill="#dfe2f0" stroke="#8088a8" />
          <path d="M0.500 9 L8 2 L16 9 L13 9 L8 4.500 L3 9Z" fill="#3454b4" stroke="#24408c" strokeWidth="0.700" />
          <path d="M2 1 H4.500 V5 L2 7Z" fill="#2c3cc4" />
          <path d="M9 10 H12 V16 H9Z" fill="#2e62ba" />
          <path d="M5 10 H7 V12 H5Z" fill="#555" />
        </svg>
        <span className="ml-2 mr-[13px] flex"><SmallCaret /></span>
        <svg viewBox="0 0 15 15" className="h-[15px] w-[15px]" aria-label="Feeds" role="img">
          <path d="M0.500 0.500 H14.500 V14.500 H0.500Z" fill="#b4b4ae" stroke="#9a9a94" />
          <circle cx="4" cy="11" r="1.500" fill="#fff" />
          <path d="M3 7 Q8 7 8 12 M3 3.500 Q11.500 3.500 11.500 12" fill="none" stroke="#fff" strokeWidth="1.500" />
        </svg>
        <span className="ml-[10px] mr-3 flex"><SmallCaret className="text-[#c4c2b4]" /></span>
        <svg viewBox="0 0 18 16" className="h-4 w-[18px]" aria-label="Print" role="img">
          <path d="M5 0.500 H13 V6 H5Z" fill="#fff" stroke="#888" />
          <path d="M1 6 H17 V12 H1Z" fill="#9a9a9e" stroke="#5c5c60" />
          <path d="M3 9 H15 V10 H3Z" fill="#3c3c40" />
          <path d="M4 11 H14 V15.500 H4Z" fill="#fff" stroke="#888" />
          <path d="M8 12 H12 V14 H8Z" fill="#3c8cdc" />
        </svg>
        <span className="ml-2 mr-2 flex"><SmallCaret /></span>
        <svg viewBox="0 0 16 16" className="h-4 w-4" aria-hidden="true">
          <path d="M0.500 0.500 H9 L12.500 4 V15.500 H0.500Z" fill="#fff" stroke="#8c96a8" />
          <path d="M3 6 H4 M6 6 H10 M3 9 H4 M6 9 H9 M3 12 H4 M6 12 H9" stroke="#7c86b0" />
          <path d="M8 13 L9 10 L14 4.500 L15.500 6 L10 12Z" fill="#e8a04c" stroke="#8c6a44" strokeWidth="0.700" />
        </svg>
        <button className="ml-[3px] flex items-center gap-[6px]"><span>S<u>i</u>de</span><SmallCaret /></button>
        <svg viewBox="0 0 16 16" className="ml-[6px] h-4 w-4" aria-hidden="true">
          <circle cx="8" cy="8" r="6.500" fill="none" stroke="#7a9cba" strokeWidth="3" strokeDasharray="2.500 1.580" />
          <circle cx="8" cy="8" r="4.500" fill="#fff" stroke="#93b3ce" strokeWidth="2.500" />
          <circle cx="8" cy="8" r="2" fill="#eef3f8" stroke="#6d90ae" />
        </svg>
        <button className="ml-[3px] flex items-center gap-[6px]"><span>F<u>u</u>nktioner</span><SmallCaret /></button>
        <button aria-label="More tools" className="ml-3 mr-[4px] self-start">
          <svg viewBox="0 0 9 7" className="h-[7px] w-[9px]"><path d="M0.500 0.500 L3.500 3.500 L0.500 6.500 M5 0.500 L8 3.500 L5 6.500" fill="none" stroke="#000" strokeWidth="1.500" /></svg>
        </button>
      </div>
    </div>
  );
}

function ScrollBar() {
  const arrow = "flex h-4 w-full shrink-0 items-center justify-center rounded-[2px] border border-white bg-gradient-to-br from-[#dbe6fe] to-[#b7cbf8]";
  return (
    <div className="mr-px flex w-[17px] shrink-0 flex-col border-l border-[#eeede5] bg-[#f7f7f2]">
      <button aria-label="Scroll up" className={arrow}><Chevron up /></button>
      <div className="min-h-0 flex-1">
        <div className="flex h-[74%] flex-col items-center justify-center rounded-[2px] border border-white bg-gradient-to-r from-[#cad9fd] to-[#b6c9f7] shadow-[0_1px_0_#8fa6dc]">
          {[0, 1, 2, 3].map((n) => (
            <span key={n} className="h-[2px] w-[7px] border-b border-[#8cb0f8] bg-[#eef4fe]" />
          ))}
        </div>
      </div>
      <button aria-label="Scroll down" className={arrow}><Chevron /></button>
    </div>
  );
}

function StatusBar() {
  return (
    <footer className="flex h-[24px] shrink-0 items-center border-t border-[#8c8a7e] bg-gradient-to-b from-[#f4f2e8] via-[#ece9d8] to-[#e4e0cc]">
      <div className="ml-auto flex gap-[23px]">
        {[0, 1, 2, 3, 4, 5, 6].map((n) => (
          <span key={n} className="h-5 w-px bg-[#cdcab9]" />
        ))}
      </div>
      <div className="flex w-[211px] items-center gap-[3px] pl-[5px] pt-[3px]">
        <svg viewBox="0 0 16 16" className="h-4 w-4" aria-hidden="true">
          <circle cx="8" cy="8" r="7.500" fill="#2c74d0" />
          <path d="M2 4 Q6 0 9 2 L8 6 L5 8 L5 12 Q1 10 1 7Z M10 5 L14 5 Q15 8 13 12 L10 13 L9 9Z" fill="#4cb84c" />
          <ellipse cx="7" cy="4" rx="4" ry="2.500" fill="#fff" opacity="0.4" />
        </svg>
        Internet
      </div>
      <span className="h-5 w-px bg-[#cdcab9]" />
      <div className="flex w-[99px] items-center pl-[11px] pt-[3px]">
        <svg viewBox="0 0 14 14" className="h-[14px] w-[14px]" aria-hidden="true">
          <path d="M8 8 L12.500 12.500" stroke="#a0643c" strokeWidth="2.500" />
          <circle cx="5.500" cy="5.500" r="4.500" fill="#e4f1fe" stroke="#6f9cd4" />
          <path d="M3 5.500 H8 M5.500 3 V8" stroke="#1c55d0" strokeWidth="1.500" />
        </svg>
        <button className="ml-px flex w-[48px] items-center justify-between">100%<SmallCaret /></button>
        <svg viewBox="0 0 12 12" className="ml-auto mr-px h-3 w-3 self-end" aria-hidden="true">
          <path d="M9 1 h2 v2 h-2z M5 5 h2 v2 h-2z M9 5 h2 v2 h-2z M1 9 h2 v2 h-2z M5 9 h2 v2 h-2z M9 9 h2 v2 h-2z" fill="#b8b4a2" />
        </svg>
      </div>
    </footer>
  );
}

/* ---------- control panel page ---------- */

function EditIcon() {
  return (
    <a href="#edit" aria-label="Edit" className="ml-2 inline-block align-text-bottom">
      <svg viewBox="0 0 16 18" className="block h-[17px] w-[15px]">
        <path d="M3 4 H14 V17 H3Z" fill="#8c8ea2" />
        <path d="M1 2 H12 V15.500 H1Z" fill="#eceefa" stroke="#b9bdd4" strokeWidth="0.800" />
        <path d="M5 12.500 L6.500 8.500 L13 1 L15.500 3 L9 10.500Z" fill="#fbd23a" stroke="#c0901c" strokeWidth="0.700" />
        <path d="M5 12.500 L6 10 L7.500 11.500Z" fill="#333" />
      </svg>
    </a>
  );
}

function LensIcon() {
  return (
    <a href="#view" aria-label="View" className="ml-[6px] inline-block align-text-bottom">
      <svg viewBox="0 0 17 17" className="block h-[17px] w-[17px]">
        <path d="M9.500 9.500 L14.500 15" stroke="#f0a62c" strokeWidth="3" />
        <path d="M9.500 10.500 L13.500 15" stroke="#fddc84" />
        <circle cx="6.500" cy="6" r="5.300" fill="#c9eafb" stroke="#7e96ac" />
        <path d="M3.500 6 Q4 3 7.500 3" fill="none" stroke="#fff" strokeWidth="1.500" />
      </svg>
    </a>
  );
}

function Panel({ title, children }: { title: string; children: ReactNode }) {
  return (
    <section className="mb-[10px] border border-[#ccc]">
      <h2 className="h-[23px] border-b border-[#ccc] bg-gradient-to-b from-[#f1f1f1] to-[#e8e8e8] px-[3px] leading-[24px]">{title}</h2>
      {children}
    </section>
  );
}

function Meter({ label }: { label: string }) {
  return (
    <div
      role="meter"
      aria-label={label}
      aria-valuenow={0}
      className="mx-[3px] h-[28px] border border-[#ccc] bg-gradient-to-b from-[#f6f6f6] to-[#d6d6d6] px-2 py-[3px]"
    >
      <div className="h-5 rounded-[5px] border border-[#808080] bg-white shadow-[inset_0_0_1px_#999,0_0_0_1px_#fff]" />
    </div>
  );
}

function Sidebar() {
  return (
    <aside className="w-[217px] shrink-0 border-r border-[#ccc] px-[5px] pt-[5px]">
      <Panel title="Information">
        <div className="px-[3px] pb-[3px] leading-[19px]">
          <p className="h-[24px] leading-[24px]">FTP Login: <b>webhosti</b></p>
          <p>Plan: <b>WebHosting (DEMO MODE)</b><EditIcon /></p>
          <p className="mt-2 whitespace-nowrap">Billing Period: <b>1 MONTH</b><EditIcon /></p>
        </div>
      </Panel>
      <Panel title="Domains">
        <ul className="px-[3px] text-[#0000ff]">
          {domains.map((domain) => (
            <li key={domain} className="h-[27px] whitespace-nowrap leading-[28px]">
              <a href="#domain">{domain}</a>
              <LensIcon />
            </li>
          ))}
          <li className="h-[22px] leading-[24px]"><a href="#domains">... more domains ...</a></li>
        </ul>
      </Panel>
      <Panel title="Statistics">
        <p className="h-[30px] px-[3px] leading-[28px]">Total traffic<LensIcon /></p>
        <Meter label="Total traffic" />
        <p className="mt-[11px] h-[22px] whitespace-nowrap px-[3px] leading-[24px]"><b>0 KB/9990000.0 GB</b><EditIcon /></p>
        <p className="h-8 px-[3px] leading-8">Disk usage<LensIcon /></p>
        <Meter label="Disk usage" />
        <p className="mt-[11px] h-[22px] whitespace-nowrap px-[3px] leading-[24px]">Avg: <b>0/2147483647 MB</b><EditIcon /></p>
        <p className="h-6 px-[3px] leading-[26px]">Last day: <b>0 MB</b></p>
      </Panel>
      <Panel title="Details">
        <table className="w-full table-fixed">
          <thead className="text-[11px]">
            <tr className="h-[22px] text-right">
              <th className="w-[118px]" aria-label="Resource" />
              <th className="w-[31px] font-normal">used</th>
              <th className="w-[25px] font-normal">free</th>
              <th className="pr-[3px] font-normal">max</th>
            </tr>
          </thead>
          <tbody>
            {details.map((row) => (
              <tr key={row.name} className="h-[21px] text-right leading-[21px]">
                <td className="whitespace-nowrap pl-[2px] text-left">{row.name}</td>
                <td>{row.used}</td>
                <td>{row.free}</td>
                <td className="pr-[3px]">—</td>
              </tr>
            ))}
          </tbody>
        </table>
      </Panel>
    </aside>
  );
}

function Banner() {
  return (
    <div className="relative h-[77px] overflow-hidden rounded-t-[5px] border border-[#8c8c8c] bg-[linear-gradient(180deg,#55a2e3_0%,#2383d9_43%,#0a6dd6_44%,#0a70d8_65%,#38a6ee_100%)]">
      <div className="absolute inset-y-0 left-0 w-[55%] bg-[linear-gradient(180deg,#4d9fe2_0%,#2a88de_32%,#1a7ad9_45%,#0d6ed6_65%,#38a4ee_100%)]" />
      <svg viewBox="0 0 190 75" className="absolute left-0 top-0 h-[75px] w-[190px]" aria-hidden="true">
        <path d="M0 0 H190 V75 H0Z" fill="url(#bannerGlow)" />
        <path d="M0 0 H190 V75 H0Z" fill="url(#bannerDeep)" />
        <path d="M0 52 Q70 52 130 75 M0 56 Q60 56 105 75 M20 10 Q90 6 150 40 Q175 55 188 70 M130 0 Q175 20 188 60 M150 0 Q186 30 188 75 M65 5 Q68 40 65 75 M112 20 Q118 50 113 75 M155 10 V75" fill="none" stroke="#9fdcfb" strokeWidth="1.500" opacity="0.25" />
        <path d="M8 75 V15 L20 6 V75Z" fill="#5cb4f4" opacity="0.15" />
      </svg>
      <svg viewBox="0 0 80 75" className="absolute right-0 top-0 h-[75px] w-20" aria-hidden="true">
        <path d="M0 32 L73 24 L76 0 H80 V75 H0Z" fill="url(#bannerDark)" />
        <path d="M0 0 H76 L73 24 L0 32Z" fill="url(#bannerSheen)" />
        <path d="M10 32 Q24 54 10 75" fill="none" stroke="#4fb4f2" strokeWidth="3" opacity="0.3" />
        <path d="M10 52 H80 V75 H10Z" fill="url(#bannerCorner)" />
      </svg>
      <a href="#home" className="relative ml-7 mt-7 flex w-fit items-center gap-[3px] text-white">
        <svg viewBox="0 0 19 14" className="h-[14px] w-[19px]" aria-hidden="true">
          <path d="M0 0 H19 V14 H0Z" fill="#f7a11c" />
          <path d="M3 4 L8 7 L3 10 M10.500 4 L15.500 7 L10.500 10" fill="none" stroke="#fff" strokeWidth="2" />
        </svg>
        <span className="text-[20px] leading-5 [text-shadow:1px_1px_0_#14509c]">SURFTOWN</span>
      </a>
    </div>
  );
}

function ControlPanel() {
  return (
    <main className="min-w-0 flex-1 overflow-hidden bg-white px-[11px] pt-[10px] font-['DejaVu_Sans',sans-serif] text-[13px] leading-[17px]">
      <Banner />
      <nav className="flex h-[19px] border border-t-0 border-[#8c8c8c] bg-[#dfdfdf] text-[11px] leading-[19px]">
        {menu.map((item, index) => (
          <a
            key={item}
            href="#menu"
            className={`whitespace-nowrap border-r border-[#999] px-[5px] ${index === 0 ? "bg-[#f6f6f6]" : "bg-gradient-to-b from-[#e9e9e9] to-[#d6d6d6]"}`}
          >
            {item}
          </a>
        ))}
      </nav>
      <div className="mt-[15px] border border-[#ccc]">
        <div className="flex h-[26px] items-center bg-gradient-to-b from-[#e9e9e9] to-[#d1d1d1] pl-[3px] pr-[5px]">
          <svg viewBox="0 0 15 15" className="h-[15px] w-[15px]" aria-label="Home" role="img">
            <path d="M0.500 0.500 H14.500 V14.500 H0.500Z" fill="#3f93dc" stroke="#0c2474" strokeWidth="1.500" />
            <path d="M2 8 L7.500 2.500 L13 8 H11.500 V12 H3.500 V8Z" fill="#fff" />
            <path d="M6.500 7.500 H9 V9.500 H6.500Z" fill="#2a7ed0" />
          </svg>
          <p className="ml-[9px] flex-1 truncate">User: webhosting Plan: WebHosting (DEMO MODE)</p>
          <button aria-label="Close panel">
            <svg viewBox="0 0 15 15" className="block h-[15px] w-[15px]">
              <path d="M0.500 0.500 H14.500 V14.500 H0.500Z" fill="#2b82cc" stroke="#0c2474" strokeWidth="1.500" />
              <path d="M4 3.500 L11 11.500 M11 3.500 L4 11.500" stroke="#fff" strokeWidth="2.500" />
            </svg>
          </button>
        </div>
        <div className="flex">
          <Sidebar />
          <div className="min-w-0 flex-1 pt-[21px]">
            {sections.map((section) => (
              <section key={section.title} className="mb-[17px] first:mb-[27px]">
                <h2 className="mb-2 pl-[50px] font-bold">{section.title}</h2>
                <ul className="-ml-px flex">
                  {section.services.map((service, index) => (
                    <li key={index} className="w-[168px] text-center">
                      <a href="#service" className="inline-block whitespace-nowrap">
                        <span className="mx-auto block h-12 w-12 border border-[#999]">{service.icon}</span>
                        {service.name}
                      </a>
                    </li>
                  ))}
                </ul>
              </section>
            ))}
          </div>
        </div>
      </div>
    </main>
  );
}

export default function App() {
  return (
    <div className="flex h-screen flex-col overflow-hidden rounded-t-[7px] bg-[linear-gradient(90deg,#0831d9,#0855e5)] font-['DejaVu_Sans_Condensed','Roboto',sans-serif] text-[11px] leading-[14px] text-black">
      <Gradients />
      <TitleBar />
      <div className="flex min-h-0 flex-1 flex-col border-x-4 border-b-4 border-[#0a48e0]">
        <div className="shrink-0 bg-gradient-to-r from-[#f5f5f5] to-[#ece9d8]">
          <AddressBar />
          <Toolbars />
          <TabRow />
          <div className="h-1 bg-[#bccff5]" />
        </div>
        <div className="flex min-h-0 flex-1 border-l border-t border-[#77756b]">
          <ControlPanel />
          <ScrollBar />
        </div>
        <StatusBar />
      </div>
    </div>
  );
}
